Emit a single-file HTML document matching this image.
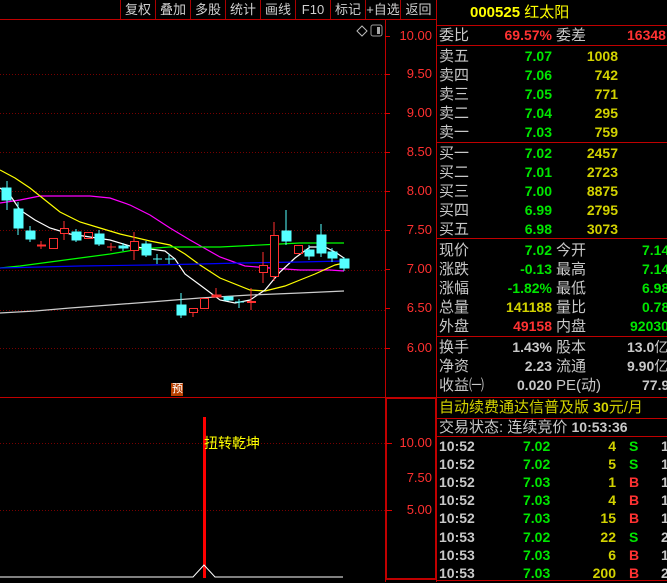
<!DOCTYPE html>
<html><head><meta charset="utf-8"><style>
*{margin:0;padding:0;box-sizing:border-box}
body{width:667px;height:582px;background:#000;overflow:hidden;position:relative;font-family:"Liberation Sans","Noto Sans CJK SC",sans-serif;}
.t{position:absolute;white-space:nowrap;font-size:15px;line-height:19px}
.cn{color:#c8c8c8}
.n{font-weight:bold;font-size:14px}
.g{color:#00e600}.y{color:#d2d200}.r{color:#ff3232}.w{color:#c8c8c8}
.ra{text-align:right}
.btn{position:absolute;top:0;height:19px;color:#d0d0d0;font-size:13px;line-height:19px;text-align:center;border-left:1px solid #a00}
.ax{position:absolute;color:#ff3030;font-size:13px;right:0;width:46px;text-align:right}
</style></head><body>
<svg width="667" height="582" style="position:absolute;left:0;top:0">
<g stroke="#c00000" stroke-width="1" fill="none">
<line x1="0" y1="19.5" x2="436" y2="19.5"/>
<line x1="385.5" y1="19" x2="385.5" y2="582"/>
<line x1="436.5" y1="0" x2="436.5" y2="582"/>
<line x1="0" y1="397.5" x2="436" y2="397.5"/>
<rect x="386" y="398" width="50" height="181" stroke-width="2"/>
<line x1="436" y1="25.5" x2="667" y2="25.5"/>
<line x1="436" y1="45.5" x2="667" y2="45.5"/>
<line x1="436" y1="142.5" x2="667" y2="142.5"/>
<line x1="436" y1="238.5" x2="667" y2="238.5"/>
<line x1="436" y1="336.5" x2="667" y2="336.5"/>
<line x1="436" y1="397.5" x2="667" y2="397.5"/>
<line x1="436" y1="418.5" x2="667" y2="418.5"/>
<line x1="436" y1="436.5" x2="667" y2="436.5"/>
<line x1="436" y1="580.5" x2="667" y2="580.5"/>
</g>
<g stroke="#700" stroke-dasharray="1,2">
<line x1="0" y1="74.5" x2="385" y2="74.5"/><line x1="0" y1="113.5" x2="385" y2="113.5"/>
<line x1="0" y1="152.5" x2="385" y2="152.5"/><line x1="0" y1="191.5" x2="385" y2="191.5"/>
<line x1="0" y1="230.5" x2="385" y2="230.5"/><line x1="0" y1="270.5" x2="385" y2="270.5"/>
<line x1="0" y1="310.5" x2="385" y2="310.5"/><line x1="0" y1="348.5" x2="385" y2="348.5"/>
<line x1="0" y1="443.5" x2="385" y2="443.5"/><line x1="0" y1="510.5" x2="385" y2="510.5"/>
</g>
<g stroke="#d00" stroke-width="1">
<line x1="385" y1="36.5" x2="390" y2="36.5"/><line x1="385" y1="74.5" x2="390" y2="74.5"/>
<line x1="385" y1="113.5" x2="390" y2="113.5"/><line x1="385" y1="152.5" x2="390" y2="152.5"/>
<line x1="385" y1="191.5" x2="390" y2="191.5"/><line x1="385" y1="230.5" x2="390" y2="230.5"/>
<line x1="385" y1="269.5" x2="390" y2="269.5"/><line x1="385" y1="308.5" x2="390" y2="308.5"/>
<line x1="385" y1="348.5" x2="390" y2="348.5"/>
<line x1="386" y1="443.5" x2="392" y2="443.5"/><line x1="386" y1="510.5" x2="392" y2="510.5"/>
</g>
<path d="M357 31 L362 26 L367 31 L362 36 Z" stroke="#bbb" fill="none"/>
<rect x="371" y="25" width="11" height="11" rx="2" stroke="#999" fill="none"/><rect x="377" y="27" width="3" height="7" fill="#aaa"/>
<g fill="none" stroke-width="1.2">
<polyline stroke="#ff00ff" points="0,203 20,200 40,196 90,196 110,198 130,205 150,215 170,228 190,240 220,257 245,266 270,268 300,270 330,270 344,271"/>
<polyline stroke="#ffff00" points="0,170 15,178 30,188 45,200 60,212 80,222 100,228 120,234 150,241 170,245 185,254 200,265 220,278 250,290 265,291 285,286 300,280 315,274 335,265 344,263"/>
<polyline stroke="#ffffff" points="0,188 10,195 20,210 35,220 50,228 70,234 90,237 110,240 130,246 150,249 165,251 175,259 185,274 200,285 220,300 235,303 250,300 265,290 280,272 295,258 310,247 325,247 335,252 344,258"/>
<polyline stroke="#00ff00" points="0,268 20,266 50,262 80,258 110,254 140,249 170,247 220,247 280,244 300,243 344,243"/>
<polyline stroke="#0000ff" points="0,268 80,266 150,265 200,264 240,263 300,262 344,261"/>
<polyline stroke="#cccccc" points="0,313 35,311 70,308 110,305 150,302 200,298 250,295 300,293 344,291"/>
</g>
<g stroke-width="1">
<g stroke="#55ffff" fill="#55ffff">
<line x1="7" y1="181" x2="7" y2="210"/><rect x="2" y="188" width="9" height="12"/>
<line x1="18" y1="202" x2="18" y2="235"/><rect x="14" y="209" width="9" height="19"/>
<line x1="30" y1="226" x2="30" y2="242"/><rect x="26" y="231" width="9" height="8"/>
<line x1="76" y1="229" x2="76" y2="242"/><rect x="72" y="232" width="9" height="8"/>
<line x1="99" y1="230" x2="99" y2="246"/><rect x="95" y="234" width="9" height="10"/>
<line x1="123" y1="243" x2="123" y2="251"/><rect x="119" y="246" width="9" height="2"/>
<line x1="146" y1="241" x2="146" y2="257"/><rect x="142" y="244" width="9" height="11"/>
<line x1="157" y1="254" x2="157" y2="264"/><line x1="153" y1="259" x2="162" y2="259"/>
<line x1="169" y1="254" x2="169" y2="264"/><line x1="165" y1="259" x2="174" y2="259"/>
<line x1="181" y1="293" x2="181" y2="318"/><rect x="177" y="305" width="9" height="10"/>
<line x1="228" y1="296" x2="228" y2="301"/><rect x="224" y="297" width="9" height="3"/>
<line x1="239" y1="299" x2="239" y2="308"/><line x1="235" y1="302" x2="244" y2="302"/>
<line x1="286" y1="210" x2="286" y2="245"/><rect x="282" y="231" width="9" height="10"/>
<line x1="309" y1="245" x2="309" y2="260"/><rect x="305" y="250" width="9" height="6"/>
<line x1="321" y1="224" x2="321" y2="257"/><rect x="317" y="235" width="9" height="18"/>
<line x1="332" y1="248" x2="332" y2="262"/><rect x="328" y="252" width="9" height="6"/>
<line x1="344" y1="257" x2="344" y2="271"/><rect x="340" y="259" width="9" height="9"/>
</g>
<g stroke="#ff3030" fill="none">
<line x1="41" y1="241" x2="41" y2="249"/><line x1="37" y1="245.5" x2="46" y2="245.5" stroke-width="2"/>
<rect x="49.5" y="238.5" width="8" height="10"/>
<line x1="64" y1="221" x2="64" y2="240"/><rect x="60.5" y="228.5" width="8" height="5" fill="#000"/>
<rect x="84.5" y="232.5" width="8" height="6"/>
<line x1="111" y1="243" x2="111" y2="251"/><line x1="107" y1="247" x2="116" y2="247"/>
<line x1="134" y1="232" x2="134" y2="260"/><rect x="130.5" y="241.5" width="8" height="9" fill="#000"/>
<line x1="193" y1="309" x2="193" y2="317"/><rect x="189.5" y="308.5" width="8" height="4" fill="#000"/>
<rect x="200.5" y="298.5" width="8" height="10"/>
<line x1="216" y1="288" x2="216" y2="297"/><rect x="212" y="295" width="9" height="2" fill="#ff3030"/>
<line x1="251" y1="288" x2="251" y2="310"/><line x1="247" y1="302" x2="256" y2="302" stroke-width="2"/>
<line x1="263" y1="252" x2="263" y2="283"/><rect x="259.5" y="265.5" width="8" height="7" fill="#000"/>
<line x1="274" y1="222" x2="274" y2="281"/><rect x="270.5" y="235.5" width="8" height="41" fill="#000"/>
<rect x="294.5" y="245.5" width="8" height="8"/>
</g>
</g>
<rect x="171" y="383" width="12" height="13" fill="#b84000"/>
<rect x="203" y="417" width="3" height="161" fill="#ff0000"/>
<polyline points="0,577 193,577 204,565 215,577 343,577" stroke="#fff" fill="none"/>
</svg>
<div class="t" style="left:172px;top:382px;font-size:11px;color:#fff;line-height:14px">预</div>
<div class="t" style="left:204px;top:434px;color:#ffff00;font-size:14px">扭转乾坤</div>

<div class="btn" style="left:120px;width:35px">复权</div>
<div class="btn" style="left:155px;width:35px">叠加</div>
<div class="btn" style="left:190px;width:35px">多股</div>
<div class="btn" style="left:225px;width:35px">统计</div>
<div class="btn" style="left:260px;width:35px">画线</div>
<div class="btn" style="left:295px;width:35px">F10</div>
<div class="btn" style="left:330px;width:35px">标记</div>
<div class="btn" style="left:365px;width:35px">+自选</div>
<div class="btn" style="left:400px;width:36px">返回</div>

<div class="ax" style="left:386px;top:28px">10.00</div>
<div class="ax" style="left:386px;top:66px">9.50</div>
<div class="ax" style="left:386px;top:105px">9.00</div>
<div class="ax" style="left:386px;top:144px">8.50</div>
<div class="ax" style="left:386px;top:183px">8.00</div>
<div class="ax" style="left:386px;top:222px">7.50</div>
<div class="ax" style="left:386px;top:261px">7.00</div>
<div class="ax" style="left:386px;top:300px">6.50</div>
<div class="ax" style="left:386px;top:340px">6.00</div>
<div class="ax" style="left:386px;top:435px">10.00</div>
<div class="ax" style="left:386px;top:470px">7.50</div>
<div class="ax" style="left:386px;top:502px">5.00</div>

<div class="t n" style="left:470px;top:3px;font-size:15px;color:#ffff00">000525 <span style="font-weight:normal">红太阳</span></div>

<div class="t cn" style="left:439px;top:26px">委比</div><div class="t n r ra" style="right:115px;top:26px">69.57%</div>
<div class="t cn" style="left:556px;top:26px">委差</div><div class="t n r" style="left:627px;top:26px">16348</div>

<div class="t cn" style="left:439px;top:47px">卖五</div><div class="t n g ra" style="right:115px;top:47px">7.07</div><div class="t n y ra" style="right:49px;top:47px">1008</div>
<div class="t cn" style="left:439px;top:66px">卖四</div><div class="t n g ra" style="right:115px;top:66px">7.06</div><div class="t n y ra" style="right:49px;top:66px">742</div>
<div class="t cn" style="left:439px;top:85px">卖三</div><div class="t n g ra" style="right:115px;top:85px">7.05</div><div class="t n y ra" style="right:49px;top:85px">771</div>
<div class="t cn" style="left:439px;top:104px">卖二</div><div class="t n g ra" style="right:115px;top:104px">7.04</div><div class="t n y ra" style="right:49px;top:104px">295</div>
<div class="t cn" style="left:439px;top:123px">卖一</div><div class="t n g ra" style="right:115px;top:123px">7.03</div><div class="t n y ra" style="right:49px;top:123px">759</div>

<div class="t cn" style="left:439px;top:144px">买一</div><div class="t n g ra" style="right:115px;top:144px">7.02</div><div class="t n y ra" style="right:49px;top:144px">2457</div>
<div class="t cn" style="left:439px;top:163px">买二</div><div class="t n g ra" style="right:115px;top:163px">7.01</div><div class="t n y ra" style="right:49px;top:163px">2723</div>
<div class="t cn" style="left:439px;top:182px">买三</div><div class="t n g ra" style="right:115px;top:182px">7.00</div><div class="t n y ra" style="right:49px;top:182px">8875</div>
<div class="t cn" style="left:439px;top:201px">买四</div><div class="t n g ra" style="right:115px;top:201px">6.99</div><div class="t n y ra" style="right:49px;top:201px">2795</div>
<div class="t cn" style="left:439px;top:220px">买五</div><div class="t n g ra" style="right:115px;top:220px">6.98</div><div class="t n y ra" style="right:49px;top:220px">3073</div>

<div class="t cn" style="left:439px;top:241px">现价</div><div class="t n g ra" style="right:115px;top:241px">7.02</div><div class="t cn" style="left:556px;top:241px">今开</div><div class="t n g" style="left:642px;top:241px">7.14</div>
<div class="t cn" style="left:439px;top:260px">涨跌</div><div class="t n g ra" style="right:115px;top:260px">-0.13</div><div class="t cn" style="left:556px;top:260px">最高</div><div class="t n g" style="left:642px;top:260px">7.14</div>
<div class="t cn" style="left:439px;top:279px">涨幅</div><div class="t n g ra" style="right:115px;top:279px">-1.82%</div><div class="t cn" style="left:556px;top:279px">最低</div><div class="t n g" style="left:642px;top:279px">6.98</div>
<div class="t cn" style="left:439px;top:298px">总量</div><div class="t n y ra" style="right:115px;top:298px">141188</div><div class="t cn" style="left:556px;top:298px">量比</div><div class="t n g" style="left:642px;top:298px">0.78</div>
<div class="t cn" style="left:439px;top:317px">外盘</div><div class="t n r ra" style="right:115px;top:317px">49158</div><div class="t cn" style="left:556px;top:317px">内盘</div><div class="t n g" style="left:630px;top:317px">92030</div>

<div class="t cn" style="left:439px;top:338px">换手</div><div class="t n w ra" style="right:115px;top:338px">1.43%</div><div class="t cn" style="left:556px;top:338px">股本</div><div class="t n w" style="left:627px;top:338px">13.0<span style="font-weight:normal">亿</span></div>
<div class="t cn" style="left:439px;top:357px">净资</div><div class="t n w ra" style="right:115px;top:357px">2.23</div><div class="t cn" style="left:556px;top:357px">流通</div><div class="t n w" style="left:627px;top:357px">9.90<span style="font-weight:normal">亿</span></div>
<div class="t cn" style="left:439px;top:376px">收益㈠</div><div class="t n w ra" style="right:115px;top:376px">0.020</div><div class="t cn" style="left:556px;top:376px">PE(动)</div><div class="t n w" style="left:642px;top:376px">77.9</div>

<div class="t y" style="left:439px;top:398px">自动续费通达信普及版 <span class="n">30</span>元/月</div>
<div class="t cn" style="left:439px;top:418px">交易状态: 连续竞价 <span class="n">10:53:36</span></div>

<div style="position:absolute;left:439px;top:437px">
<div class="t n w" style="left:0;top:0">10:52</div><div class="t n g" style="left:84px;top:0">7.02</div><div class="t n y ra" style="right:-177px;top:0">4</div><div class="t n g" style="left:190px;top:0">S</div><div class="t n w" style="left:222px;top:0">1</div>
<div class="t n w" style="left:0;top:18px">10:52</div><div class="t n g" style="left:84px;top:18px">7.02</div><div class="t n y ra" style="right:-177px;top:18px">5</div><div class="t n g" style="left:190px;top:18px">S</div><div class="t n w" style="left:222px;top:18px">1</div>
<div class="t n w" style="left:0;top:36px">10:52</div><div class="t n g" style="left:84px;top:36px">7.03</div><div class="t n y ra" style="right:-177px;top:36px">1</div><div class="t n r" style="left:190px;top:36px">B</div><div class="t n w" style="left:222px;top:36px">1</div>
<div class="t n w" style="left:0;top:54px">10:52</div><div class="t n g" style="left:84px;top:54px">7.03</div><div class="t n y ra" style="right:-177px;top:54px">4</div><div class="t n r" style="left:190px;top:54px">B</div><div class="t n w" style="left:222px;top:54px">1</div>
<div class="t n w" style="left:0;top:72px">10:52</div><div class="t n g" style="left:84px;top:72px">7.03</div><div class="t n y ra" style="right:-177px;top:72px">15</div><div class="t n r" style="left:190px;top:72px">B</div><div class="t n w" style="left:222px;top:72px">1</div>
<div class="t n w" style="left:0;top:91px">10:53</div><div class="t n g" style="left:84px;top:91px">7.02</div><div class="t n y ra" style="right:-177px;top:91px">22</div><div class="t n g" style="left:190px;top:91px">S</div><div class="t n w" style="left:222px;top:91px">2</div>
<div class="t n w" style="left:0;top:109px">10:53</div><div class="t n g" style="left:84px;top:109px">7.03</div><div class="t n y ra" style="right:-177px;top:109px">6</div><div class="t n r" style="left:190px;top:109px">B</div><div class="t n w" style="left:222px;top:109px">1</div>
<div class="t n w" style="left:0;top:127px">10:53</div><div class="t n g" style="left:84px;top:127px">7.03</div><div class="t n y ra" style="right:-177px;top:127px">200</div><div class="t n r" style="left:190px;top:127px">B</div><div class="t n w" style="left:222px;top:127px">2</div>
</div>
</body></html>
